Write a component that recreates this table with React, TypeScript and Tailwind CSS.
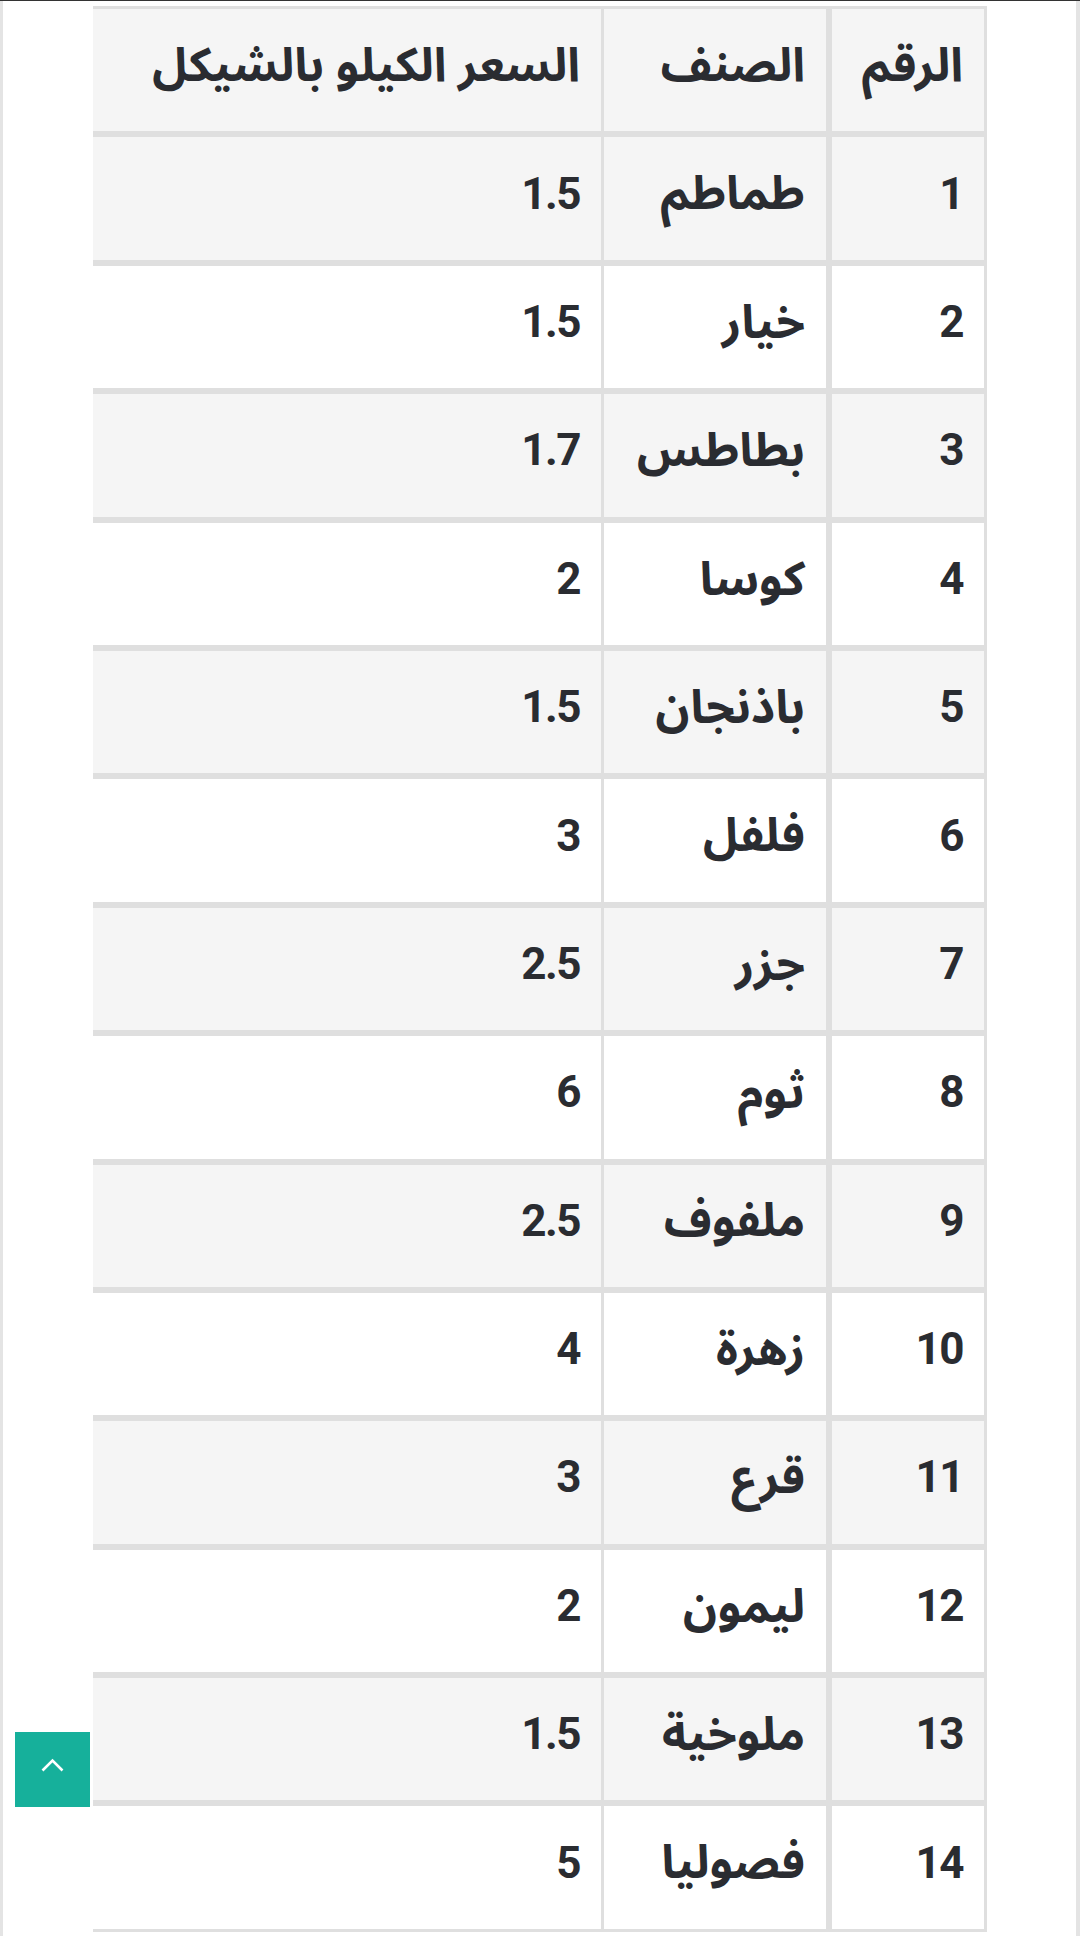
const rows: [string, string, string][] = [
  ["1", "طماطم", "1.5"],
  ["2", "خيار", "1.5"],
  ["3", "بطاطس", "1.7"],
  ["4", "كوسا", "2"],
  ["5", "باذنجان", "1.5"],
  ["6", "فلفل", "3"],
  ["7", "جزر", "2.5"],
  ["8", "ثوم", "6"],
  ["9", "ملفوف", "2.5"],
  ["10", "زهرة", "4"],
  ["11", "قرع", "3"],
  ["12", "ليمون", "2"],
  ["13", "ملوخية", "1.5"],
  ["14", "فصوليا", "5"],
];

// digits render a bit narrower than the arabic text in the original
function Txt({ children }: { children: string }) {
  const isNum = /^[0-9.]+$/.test(children);
  return (
    <span className={isNum ? "text-[44px] tracking-[-1.5px]" : "text-[47px]"}>{children}</span>
  );
}

function Row({ cells, shaded }: { cells: [string, string, string]; shaded: boolean }) {
  const bg = shaded ? "bg-[#f5f5f5]" : "bg-white";
  const cell = `flex items-center pr-[21px] pb-[10px] h-[128.4px] border-y-[3px] border-[#dfdfdf] ${bg}`;
  return (
    <div className="flex">
      <div className={`${cell} w-[158px] shrink-0 border-x-[3px]`}>
        <Txt>{cells[0]}</Txt>
      </div>
      <div className={`${cell} w-[228px] shrink-0 border-x-[3px]`}>
        <Txt>{cells[1]}</Txt>
      </div>
      <div className={`${cell} flex-1 whitespace-nowrap`}>
        <Txt>{cells[2]}</Txt>
      </div>
    </div>
  );
}

export default function App() {
  return (
    <div className="relative w-[1080px] h-[1936px] overflow-hidden bg-white border-t border-[#333333]">
      <div className="h-full border-l-[3px] border-r-[4px] border-[#e4e4e4] pt-[5px] pl-[90px] pr-[89px]">
        <div
          dir="rtl"
          className="w-[894px] font-bold text-[#2a2c31] overflow-hidden"
          style={{ fontFamily: "Roboto, 'Noto Sans Arabic', 'DejaVu Sans', sans-serif" }}
        >
          <Row cells={["الرقم", "الصنف", "السعر الكيلو بالشيكل"]} shaded />
          {rows.map((r, i) => (
            <Row key={r[0]} cells={r} shaded={i % 2 === 0} />
          ))}
        </div>
      </div>

      {/* back to top */}
      <button className="absolute left-[15px] top-[1731px] w-[75px] h-[75px] bg-[#16b09b] flex items-start justify-start pl-[26px] pt-[26px]">
        <svg width="23" height="14" viewBox="0 0 23 14" fill="none">
          <polyline points="1.5,12.5 11.5,2.5 21.5,12.5" stroke="white" strokeWidth="2.6" />
        </svg>
      </button>
    </div>
  );
}
